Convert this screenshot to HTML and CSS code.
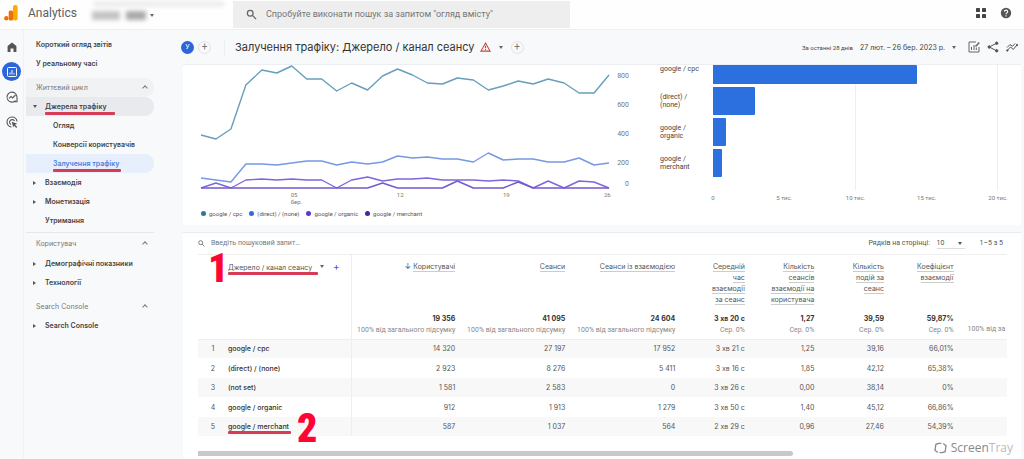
FILE: index.html
```html
<!DOCTYPE html>
<html lang="uk">
<head>
<meta charset="utf-8">
<title>Analytics</title>
<link rel="stylesheet" href="styles.css">
</head>
<body>
<header class="topbar">
  <svg class="logo" viewBox="0 0 14 16"><rect x="9" y="0" width="4.6" height="15.5" rx="2" fill="#f9ab00"/><rect x="4.7" y="5.5" width="4.4" height="10" rx="1.6" fill="#e8710a"/><circle cx="2.3" cy="13.2" r="2.2" fill="#e8710a"/></svg>
  <span class="brand">Analytics</span>
  <button class="account" aria-label="Account"><span class="smudge smudge-top"></span><span class="smudge smudge-a"></span><span class="smudge smudge-b"></span><span class="caret"></span></button>
  <label class="search">
    <svg class="icon-search" viewBox="0 0 12 12"><circle cx="4.6" cy="4.6" r="3.1"/><path d="M7 7l4 4"/></svg>
    <input type="text" aria-label="Пошук" placeholder='Спробуйте виконати пошук за запитом "огляд вмісту"'>
  </label>
  <button class="icon-btn apps" aria-label="Apps"><svg viewBox="0 0 12 12" fill="#444"><rect x="1" y="1" width="4" height="4" rx=".6"/><rect x="7" y="1" width="4" height="4" rx=".6"/><rect x="1" y="7" width="4" height="4" rx=".6"/><rect x="7" y="7" width="4" height="4" rx=".6"/></svg></button>
  <button class="icon-btn help" aria-label="Help"><svg viewBox="0 0 12 12"><circle cx="6" cy="6" r="5.2" fill="#555"/><path d="M4.4 4.7c0-2.2 3.3-2.1 3.3 0 0 1.2-1.7 1.2-1.7 2.5M6 8.3v1.1" fill="none" stroke="#fff" stroke-width="1.1"/></svg></button>
</header>
<div class="shell">
  <aside class="rail">
    <button class="rail-btn" aria-label="Головна"><svg viewBox="0 0 12 12"><path d="M1.6 5L6 1.4 10.400 5v6H7.500V7.400h-3V11H1.600z" fill="#555"/></svg></button>
    <button class="rail-btn active" aria-label="Звіти"><svg viewBox="0 0 12 12" fill="none" stroke="#fff"><rect x="1.500" y="1.500" width="9" height="9" rx="1"/><path d="M4 8.500V6.500M6 8.500V4M8 8.500V7.200"/></svg></button>
    <button class="rail-btn" aria-label="Дослідження"><svg viewBox="0 0 12 12" fill="none" stroke="#555" stroke-width="1.100"><path d="M9.600 9.600A5 5 0 1 1 11 6v4.800H7"/><path d="M3 7.400l2-2 1.600 1.500L9.500 4"/></svg></button>
    <button class="rail-btn" aria-label="Реклама"><svg viewBox="0 0 12 12" fill="none" stroke="#555" stroke-width="1.100"><path d="M5.500 11A5 5 0 1 1 11 5.500"/><path d="M5 8.500A2.600 2.600 0 1 1 8.500 5"/><path d="M5.800 5.800l5.400 2-2.200 1 2.200 2.200-1 1L8 9.600l-.8 1.800z" fill="#555" stroke="none"/></svg></button>
  </aside>
  <nav class="nav">
    <a class="item top" href="#">Короткий огляд звітів</a>
    <a class="item top" href="#">У реальному часі</a>
    <button class="group hover">Життєвий цикл<span class="chev"></span></button>
    <a class="item parent current" href="#"><span class="mark">Джерела трафіку</span></a>
    <a class="item child" href="#">Огляд</a>
    <a class="item child" href="#">Конверсії користувачів</a>
    <a class="item child selected" href="#"><span class="mark">Залучення трафіку</span></a>
    <a class="item parent" href="#">Взаємодія</a>
    <a class="item parent" href="#">Монетизація</a>
    <a class="item leaf" href="#">Утримання</a>
    <button class="group ruled">Користувач<span class="chev"></span></button>
    <a class="item parent" href="#">Демографічні показники</a>
    <a class="item parent" href="#">Технології</a>
    <button class="group">Search Console<span class="chev"></span></button>
    <a class="item parent" href="#">Search Console</a>
  </nav>
  <main class="main">
    <div class="titlebar">
      <span class="chip">У</span>
      <button class="add" aria-label="Додати">+</button>
      <h1>Залучення трафіку: Джерело / канал сеансу</h1>
      <svg class="warn" viewBox="0 0 12 11"><path d="M6 1.200L11 10H1z" fill="none" stroke="#c5473c" stroke-width="1.200"/><path d="M6 4v3M6 7.800v1" stroke="#c5473c" stroke-width="1.200"/></svg>
      <span class="caret"></span>
      <button class="add" aria-label="Додати фільтр">+</button>
      <button class="dates"><span class="range-name">За останні 28 днів</span><span>27 лют. – 26 бер. 2023 р.</span><span class="caret"></span></button>
      <button class="icon-btn" aria-label="Редагувати"><svg viewBox="0 0 12 12" fill="none" stroke="#666"><path d="M11 6v5H1V1h7"/><path d="M3.500 9V6M6 9V4M8.300 9V6.500"/><path d="M7.500 5.500L11.300 1.500" stroke-width="1.500"/></svg></button>
      <button class="icon-btn" aria-label="Поділитися"><svg viewBox="0 0 12 12" fill="#555" stroke="#555"><path d="M9.600 2.200L2.300 6l7.300 3.800" fill="none"/><circle cx="9.700" cy="2.200" r="1.200"/><circle cx="2.200" cy="6" r="1.200"/><circle cx="9.700" cy="9.800" r="1.200"/></svg></button>
      <button class="icon-btn" aria-label="Статистика"><svg viewBox="0 0 12 12" fill="#555" stroke="#555"><path d="M1.200 9.500L4.500 6l2.800 2.400L11 4M1 6.500l3-3 2.500 1.800L9 2.500" fill="none"/><circle cx="1.300" cy="9.500" r=".7"/><circle cx="11" cy="4" r=".7"/></svg></button>
    </div>
    <section class="panel charts">
      <div class="trend">
        <svg class="lines" viewBox="0 0 409 125" preserveAspectRatio="none">
          <g fill="none" stroke-width="1.400" stroke-linejoin="round">
            <polyline stroke="#669fba" points="0,70 15,74 30,64 45,20 61,5 76,8 91,1 106,14 121,14 136,26 151,18 167,25 182,11 197,4 212,10 227,18 242,19 257,13 273,15 288,25 303,21 318,16 333,19 348,14 364,18 379,28 394,28 409,10"/>
            <polyline stroke="#7599e2" points="0,113 15,115 30,117 45,99 61,99 76,100 91,98 106,96 121,96 136,100 151,97 167,99 182,97 197,91 212,93 227,92 242,94 257,94 273,97 288,88 303,95 318,94 333,94 348,97 364,97 379,93 394,100 409,98"/>
            <polyline stroke="#7e66dc" points="0,123 15,118 30,123 45,115 61,114 76,115 91,114 106,115 121,115 136,123 151,115 167,112 182,116 197,114 212,114 227,113 242,115 257,115 273,115 288,116 303,115 318,116 333,123 348,116 364,123 379,116 394,117 409,123"/>
            <polyline stroke="#7359cb" points="0,123 167,123 182,118 197,123 242,123 257,116 273,123 303,123 318,117 333,123 409,123"/>
          </g>
        </svg>
        <div class="y-axis"><span>800</span><span>600</span><span>400</span><span>200</span><span>0</span></div>
        <div class="x-axis"><span>05<br>бер.</span><span>12</span><span>19</span><span>26</span></div>
        <ul class="legend"><li class="cpc">google / cpc</li><li class="direct">(direct) / (none)</li><li class="organic">google / organic</li><li class="merchant">google / merchant</li></ul>
      </div>
      <div class="bars">
        <div class="bar-labels"><span>google / cpc</span><span>(direct) /<br>(none)</span><span>google /<br>organic</span><span>google /<br>merchant</span></div>
        <div class="plot"><i style="width:71.700%"></i><i style="width:14.700%"></i><i style="width:4.600%"></i><i style="width:3%"></i></div>
        <div class="bar-axis"><span>0</span><span>5 тис.</span><span>10 тис.</span><span>15 тис.</span><span>20 тис.</span></div>
      </div>
    </section>
    <section class="panel report">
      <div class="tools">
        <label class="find"><svg class="icon-search" viewBox="0 0 12 12"><circle cx="4.600" cy="4.600" r="3.400"/><path d="M7 7l4 4"/></svg><input type="text" aria-label="Пошук у таблиці" placeholder="Введіть пошуковий запит…"></label>
        <label class="rows">Рядків на сторінці: <select><option>10</option><option>25</option></select></label>
        <span class="pages">1–5 з 5</span>
      </div>
      <div class="scroller">
        <table>
          <colgroup><col class="c-no"><col class="c-name"><col class="c-users"><col class="c-wide"><col class="c-wide"><col class="c-slim"><col class="c-slim"><col class="c-slim"><col class="c-slim"><col></colgroup>
          <thead>
            <tr class="heads"><th></th><th class="name"><span class="mark dim">Джерело / канал сеансу</span><span class="caret"></span><button class="plus" aria-label="Додати параметр">+</button></th><th><span class="arrow">↓</span> <u>Користувачі</u></th><th><u>Сеанси</u></th><th><u>Сеанси із взаємодією</u></th><th><u>Середній<br>час<br>взаємодії<br>за сеанс</u></th><th><u>Кількість<br>сеансів<br>взаємодії на<br>користувача</u></th><th><u>Кількість<br>подій за<br>сеанс</u></th><th><u>Коефіцієнт<br>взаємодії</u></th><th></th></tr>
            <tr class="totals"><td></td><td class="name"></td><td><b>19 356</b><br>100% від загального підсумку</td><td><b>41 095</b><br>100% від загального підсумку</td><td><b>24 604</b><br>100% від загального підсумку</td><td><b>3 хв 20 с</b><br>Сер. 0%</td><td><b>1,27</b><br>Сер. 0%</td><td><b>39,59</b><br>Сер. 0%</td><td><b>59,87%</b><br>Сер. 0%</td><td class="cut"><br>100% від за</td></tr>
          </thead>
          <tbody>
            <tr><td>1</td><td class="name">google / cpc</td><td>14 320</td><td>27 197</td><td>17 952</td><td>3 хв 21 с</td><td>1,25</td><td>39,16</td><td>66,01%</td><td></td></tr>
            <tr><td>2</td><td class="name">(direct) / (none)</td><td>2 923</td><td>8 276</td><td>5 411</td><td>3 хв 16 с</td><td>1,85</td><td>42,12</td><td>65,38%</td><td></td></tr>
            <tr><td>3</td><td class="name">(not set)</td><td>1 581</td><td>2 583</td><td>0</td><td>3 хв 26 с</td><td>0,00</td><td>38,14</td><td>0%</td><td></td></tr>
            <tr><td>4</td><td class="name">google / organic</td><td>912</td><td>1 913</td><td>1 279</td><td>3 хв 50 с</td><td>1,40</td><td>45,12</td><td>66,86%</td><td></td></tr>
            <tr><td>5</td><td class="name"><span class="mark">google / merchant</span></td><td>587</td><td>1 037</td><td>564</td><td>2 хв 29 с</td><td>0,96</td><td>27,46</td><td>54,39%</td><td></td></tr>
          </tbody>
        </table>
      </div>
      <div class="scrollbar"><i></i></div>
      <b class="note note-one">1</b>
      <b class="note note-two">2</b>
    </section>
  </main>
</div>
<div class="watermark"><svg viewBox="0 0 14 13" fill="none" stroke="#888" stroke-width="1.400"><path d="M5 1.500L2 2.500 1 9l3 2.500M9 11.500l3-1L13 4l-3-2.500M5 1.500h3M6 11.500h3"/></svg><span>Screen<em>Tray</em></span></div>
</body>
</html>
```
FILE: styles.css
```css
* { box-sizing: border-box; }
body { margin: 0; min-height: 100vh; background: #f8f9fb; color: #444; font: 8px/11px Roboto, "Noto Sans", sans-serif; position: relative; overflow-x: hidden; }
button, input, select { font: inherit; color: inherit; border: 0; background: none; padding: 0; margin: 0; }
a { color: inherit; text-decoration: none; }
svg { display: block; overflow: visible; }
.caret { display: inline-block; border: 2px solid transparent; border-top: 3px solid #666; border-bottom: 0; }

.topbar { height: 30px; display: flex; align-items: center; background: #fefefe; border-bottom: 1px solid #eff0f2; padding: 0 12px 3px 4px; }
.logo { width: 14px; height: 16px; }
.brand { font: 12px/16px Roboto, sans-serif; color: #606060; margin-left: 10px; width: 62px; }
.account { position: relative; width: 138px; height: 22px; }
.account .caret { position: absolute; left: 60px; top: 12px; }
.smudge { position: absolute; filter: blur(2px); background: #c4c4c4; height: 9px; }
.smudge-top { left: 4px; top: 0; width: 130px; height: 4px; background: #e6e6e6; }
.smudge-a { left: 2px; top: 9px; width: 28px; }
.smudge-b { left: 36px; top: 9px; width: 20px; background: #aaa; }
.search { flex: 0 1 337px; height: 27px; margin-left: 5px; background: #eee; display: flex; align-items: center; padding-left: 13px; gap: 9px; margin-bottom: -2px; }
.search input { flex: 1; min-width: 0; font-size: 9px; }
.icon-search { width: 11px; height: 11px; fill: none; stroke: #666; stroke-width: 1.400; }
::placeholder { color: #777; opacity: 1; }
.icon-btn svg { width: 12px; height: 12px; }
.apps { margin-left: auto; }
.help { margin-left: 13px; }

.shell { display: flex; }
.rail { flex: 0 0 24px; padding-top: 7px; border-right: 1px solid #f0f1f4; display: flex; flex-direction: column; gap: 6px; align-items: center; }
.rail-btn { width: 19px; height: 19px; display: grid; place-items: center; border-radius: 50%; }
.rail-btn svg { width: 12px; height: 12px; }
.rail .active { background: #2b67d9; }

.nav { flex: 0 0 159px; padding: 5px 29px 0 2px; font: 600 7px/11px Inter, Roboto, sans-serif; color: #444; }
.item { display: block; height: 19px; line-height: 19px; padding-left: 10px; border-radius: 0 9px 9px 0; position: relative; white-space: nowrap; }
.parent, .leaf { padding-left: 19px; }
.child { padding-left: 27px; }
.parent::before { content: ""; position: absolute; left: 7px; top: 8px; border: 2px solid transparent; border-left: 3px solid #555; border-right: 0; }
.current { background: #e8eaed; }
.current::before { border: 2px solid transparent; border-top: 3px solid #555; border-bottom: 0; }
.selected { background: #e7eefc; color: #4a7fe0; }
.group { width: 100%; height: 19px; margin-top: 5px; padding: 0 7px 0 10px; display: flex; align-items: center; justify-content: space-between; color: #777; font-weight: 400; border-radius: 0 9px 9px 0; }
.hover { background: #f1f2f4; }
.ruled { border-top: 1px solid #e6e7ea; margin-top: 2px; height: 22px; border-radius: 0; }
.chev { width: 4px; height: 4px; border: solid #777; border-width: 1px 0 0 1px; transform: rotate(45deg); }
.mark { position: relative; display: inline-block; }
.mark::after { content: ""; position: absolute; left: 0; right: -2px; bottom: 0; height: 3px; border-radius: 1px; background: #d63c55; }
.nav .mark::after { bottom: 1px; }
.current .mark::after { right: -8px; }

.main { flex: 1; min-width: 0; padding-right: 3px; }
.titlebar { height: 35px; display: flex; align-items: center; padding-right: 3px; border-bottom: 1px solid #eceef1; }
.chip { width: 13px; height: 13px; border-radius: 50%; background: #2b67d9; color: #fff; font: 7px/13px Roboto, sans-serif; text-align: center; margin-left: -2px; }
.add { width: 13px; height: 13px; border-radius: 50%; border: 1px solid #e2e3e5; line-height: 10px; font-size: 10px; color: #777; margin-left: 4px; }
h1 { margin: 0 0 0 13px; padding-left: 10px; border-left: 1px solid #eceef1; font: 11px/16px Inter, Roboto, sans-serif; color: #333; white-space: nowrap; }
.warn { width: 11px; height: 10px; margin: 0 8px 0 5px; }
.titlebar .caret + .add { margin-left: 8px; }
.dates { margin-left: auto; margin-right: 12px; display: flex; align-items: center; gap: 7px; white-space: nowrap; font: 7px/11px Inter, Roboto, sans-serif; }
.range-name { font: 6px/11px Roboto, sans-serif; }
.titlebar .icon-btn + .icon-btn { margin-left: 7px; }

.panel { background: #fff; }
.charts { display: grid; grid-template-columns: 446fr 361fr; column-gap: 13px; padding-left: 18px; height: 160px; font-size: 7px; line-height: 8px; color: #777; }
.trend { display: grid; grid-template-columns: 1fr 38px; grid-template-rows: 125px 18px auto; }
.lines { width: 100%; height: 125px; }
.y-axis { padding: 7px 18px 0 0; text-align: right; }
.y-axis span { display: block; height: 29px; }
.y-axis span:nth-child(4) { height: 21px; }
.y-axis span:last-child { height: 8px; }
.x-axis { grid-column: 1; display: grid; grid-template-columns: 7fr 7fr 7fr 0; margin-left: 22%; padding-top: 1px; line-height: 7px; font-size: 6px; }
.x-axis span:last-child { margin-left: -5px; }
.legend { grid-column: 1 / 3; list-style: none; margin: 2px 0 0; padding: 0; display: flex; gap: 7px; color: #555; white-space: nowrap; font-size: 6px; }
.legend li::before { content: ""; display: inline-block; width: 5px; height: 5px; border-radius: 50%; margin-right: 3px; background: #2c7897; }
.legend .direct::before { background: #2b6fdd; }
.legend .organic::before { background: #5b35d5; }
.legend .merchant::before { background: #4424a8; }
.bars { display: grid; grid-template-columns: 53px 1fr; grid-template-rows: 125px auto; padding-right: 23px; }
.bar-labels { display: grid; grid-template-rows: 19px 28px 28px 28px; row-gap: 3px; align-content: start; color: #444; }
.bar-labels span { align-self: center; }
.bar-labels span:first-child { align-self: start; }
.plot { display: grid; grid-template-rows: 19px 28px 28px 28px; row-gap: 3px; align-content: start; background: linear-gradient(#eee, #eee) 50% 0 / 1px 100% no-repeat; border: solid #eee; border-width: 0 1px 0 0; }
.plot i { background: #2b70de; border-radius: 0 1px 1px 0; }
.bar-axis { grid-column: 2; display: flex; justify-content: space-between; padding-top: 4px; font-size: 6px; }
.bar-axis span { width: 0; display: flex; justify-content: center; white-space: nowrap; }

.report { position: relative; margin-top: 7px; border-top: 1px solid #e9ebee; padding: 0 14px 0 15px; }
.tools { height: 22px; display: flex; align-items: center; border-bottom: 1px solid #eee; font-size: 7px; color: #555; }
.find { flex: 1; display: flex; align-items: center; gap: 6px; }
.find .icon-search { width: 7px; height: 7px; }
.rows { position: relative; }
.rows select { appearance: none; width: 28px; height: 11px; margin-left: 5px; border-bottom: 1px solid #ddd; }
.rows::after { content: ""; position: absolute; right: 3px; top: 4px; border: 2px solid transparent; border-top: 3px solid #555; border-bottom: 0; }
.pages { margin: 0 4px 0 15px; }
.scroller { overflow: hidden; }
table { width: 100%; table-layout: fixed; border-collapse: collapse; font: 7px/11px Inter, Roboto, sans-serif; }
th, td { padding: 0; text-align: right; vertical-align: top; font-weight: 400; white-space: nowrap; }
.c-no { width: 3.700%; }
.c-name { width: 15.300%; }
.c-users { width: 12.800%; }
.c-wide { width: 13.600%; }
.c-slim { width: 8.600%; }
.name { text-align: left; border-right: 1px solid #eee; }
.heads th { height: 56px; padding-top: 6px; color: #555; }
.heads u { text-decoration: none; border-bottom: 1px solid #ccc; }
.heads .mark::after { bottom: -2px; right: -6px; }
.heads .caret { margin: 0 9px 2px 8px; }
.plus { color: #3f51d5; font-size: 10px; line-height: 11px; }
.arrow { font-size: 8px; }
.totals td { height: 28px; padding-top: 2px; color: #888; border-bottom: 1px solid #eee; font-family: Roboto, sans-serif; }
.totals b { color: #333; font-weight: 700; font-family: Inter, Roboto, sans-serif; }
.totals .cut { text-align: left; padding-left: 14px; }
tbody td { height: 19px; vertical-align: middle; color: #555; }
tbody tr:nth-child(even) td { height: 20px; }
tbody tr:nth-child(odd) { background: #f8f8f9; }
tbody td:first-child { text-align: center; }
tbody .name { color: #333; font-weight: 500; }
tbody .mark::after { bottom: -2px; }
.note { position: absolute; color: #ff0535; font: 900 40px/40px "Liberation Sans Narrow", "Roboto Condensed", "Open Sans Condensed", "Liberation Sans", sans-serif; }
.note-one { left: 25px; top: 16px; }
.note-two { left: 114px; top: 176px; }
.scrollbar { padding: 15px 0 2px; margin-right: 5px; }
.scrollbar i { display: block; width: 74%; height: 5px; border-radius: 0 3px 3px 0; background: #c8c8c8; }
.watermark { position: absolute; right: 11px; bottom: 3px; display: flex; align-items: center; gap: 4px; font: 12px/16px "Open Sans", sans-serif; color: #888; }
.watermark svg { width: 13px; height: 12px; }
.watermark em { font-style: normal; color: #bbb; }
```
